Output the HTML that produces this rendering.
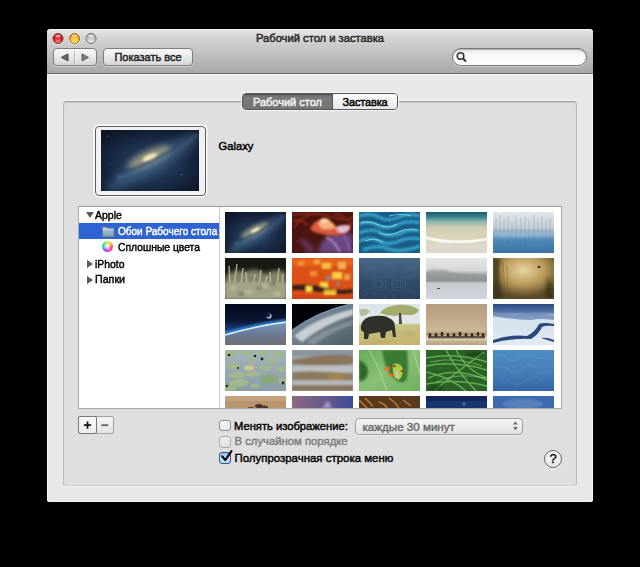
<!DOCTYPE html>
<html><head><meta charset="utf-8">
<style>
*{margin:0;padding:0;box-sizing:border-box}
html,body{width:640px;height:567px;overflow:hidden;background:#000}
body{position:relative;font-family:"Liberation Sans",sans-serif;font-size:11px;color:#000;-webkit-text-stroke:0.45px currentColor}
.a{position:absolute}
#win{left:47px;top:29px;width:546px;height:473px;background:#e8e8e8;border-radius:4px 4px 3px 3px;overflow:hidden;box-shadow:inset 1px 0 0 #f6f6f6,inset -1px 0 0 #f6f6f6,inset 0 -1px 0 #f6f6f6}
#tb{left:47px;top:29px;width:546px;height:45px;background:linear-gradient(#e4e4e4 0px,#d4d4d4 8px,#a6a6a6 44px);border-bottom:1px solid #686868;border-top:1px solid #f4f4f4;border-radius:4px 4px 0 0;box-shadow:0 1px 0 #f8f8f8}
.tl{width:11px;height:11px;border-radius:50%;top:32px}
#title{left:47px;width:546px;top:32px;text-align:center;font-size:11.2px;color:#222;text-shadow:0 1px 0 rgba(255,255,255,.5)}
.btn{background:linear-gradient(#f8f8f8,#e8e8e8 50%,#d6d6d6);border:1px solid #7e7e7e;border-radius:4px;box-shadow:0 1px 0 rgba(255,255,255,.45)}
#gb{left:63px;top:101px;width:514px;height:385px;background:#dfdfdf;border:1px solid #b9b9b9;border-top-color:#9c9c9c;border-bottom-color:#d0d0d0;border-radius:3px;box-shadow:0 1px 0 #f2f2f2,0 -1px 0 #f6f6f6,inset 0 1px 1px rgba(0,0,0,.1)}
#tabs{left:242px;top:93px;width:156px;height:17px;border:1px solid #555;border-radius:4px;overflow:hidden;box-shadow:0 0 0 1px rgba(255,255,255,.75)}
#list{left:78px;top:206px;width:484px;height:203px;background:#fff;border:1px solid #a9a9a9;border-top-color:#9a9a9a}
.t{position:absolute;width:61px;height:41px;overflow:hidden}
.cb{position:absolute;width:12px;height:12px;border:1px solid #8c8c8c;border-radius:3px;background:linear-gradient(#fff,#e9e9e9)}
.lbl{position:absolute;font-size:11.2px;white-space:nowrap;text-shadow:0 1px 0 rgba(255,255,255,.45)}
.row{position:absolute;font-size:11px;white-space:nowrap}
</style></head><body>
<div id="win" class="a"></div>
<div id="tb" class="a"></div>
<svg class="a" style="left:50px;top:30.5px" width="48" height="16" viewBox="0 0 48 16">
<defs>
<radialGradient id="rdb" cx="50%" cy="80%" r="70%"><stop offset="0" stop-color="#ff8a80"/><stop offset=".5" stop-color="#d8302a"/><stop offset="1" stop-color="#a81410"/></radialGradient>
<radialGradient id="ylb" cx="50%" cy="85%" r="75%"><stop offset="0" stop-color="#fff27a"/><stop offset=".5" stop-color="#f7c23a"/><stop offset="1" stop-color="#de8a18"/></radialGradient>
<radialGradient id="gyb" cx="50%" cy="80%" r="70%"><stop offset="0" stop-color="#e8e8e8"/><stop offset=".6" stop-color="#c4c4c4"/><stop offset="1" stop-color="#a0a0a0"/></radialGradient>
</defs>
<g transform="translate(8 7.5)"><circle r="6.2" fill="rgba(235,248,250,.8)"/><circle r="5.1" fill="url(#rdb)" stroke="#8a1c1a" stroke-width=".9"/><ellipse cy="-2.6" rx="2.8" ry="1.6" fill="#fff" opacity=".55"/></g>
<g transform="translate(24.5 7.5)"><circle r="6.2" fill="rgba(235,245,252,.8)"/><circle r="5.1" fill="url(#ylb)" stroke="#9a5a10" stroke-width=".9"/><ellipse cy="-2.6" rx="2.8" ry="1.6" fill="#fff" opacity=".5"/></g>
<g transform="translate(41 7.5)"><circle r="6.2" fill="rgba(240,240,240,.6)"/><circle r="5.1" fill="url(#gyb)" stroke="#6e6e6e" stroke-width="1"/><ellipse cy="-2.6" rx="2.8" ry="1.6" fill="#fff" opacity=".5"/></g>
</svg>
<div id="title" class="a">Рабочий стол и заставка</div>
<div class="a btn" style="left:53px;top:48px;width:44px;height:18px"></div>
<div class="a" style="left:74px;top:51px;width:1px;height:12.5px;background:#b0b0b0;box-shadow:1px 0 0 rgba(255,255,255,.5)"></div>
<svg class="a" style="left:53px;top:49px" width="44" height="17"><path d="M8.3 8.4 L15 4.9 L15 11.9Z" fill="#6a6a6a" stroke="#404040" stroke-width=".9" stroke-linejoin="round"/><path d="M35.4 8.4 L29 4.9 L29 11.9Z" fill="#7e7e7e" stroke="#505050" stroke-width=".9" stroke-linejoin="round"/></svg>
<div class="a btn" style="left:103px;top:48px;width:90px;height:18px"></div>
<div class="a" style="left:103px;top:51px;width:90px;text-align:center;font-size:11px;color:#222">Показать все</div>
<div class="a" style="left:452px;top:48px;width:135px;height:18px;border-radius:9px;background:linear-gradient(#e8e8e8,#fafafa 40%,#fff);border:1px solid #777;box-shadow:inset 0 1px 1px rgba(0,0,0,.25),0 1px 0 rgba(255,255,255,.4)"></div>
<svg class="a" style="left:455.2px;top:51.2px" width="14" height="12"><circle cx="5.5" cy="5" r="3.3" fill="none" stroke="#333" stroke-width="1.6"/><path d="M8 7.5 L11 10.5" stroke="#333" stroke-width="2"/></svg>

<div id="gb" class="a"></div>
<div id="tabs" class="a">
  <div class="a" style="left:0;top:0;width:89px;height:15px;background:linear-gradient(#666,#7a7a7a 25%,#747474);box-shadow:inset 0 1px 1px rgba(0,0,0,.25);color:#f4f4f4;text-align:center;line-height:16px;font-size:11px">Рабочий стол</div>
  <div class="a" style="left:89px;top:0;width:65px;height:15px;background:linear-gradient(#fdfdfd,#f0f0f0 60%,#e6e6e6);border-left:1px solid #555;color:#000;text-align:center;line-height:16px;font-size:11px;letter-spacing:-.15px">Заставка</div>
</div>

<!-- preview -->
<div class="a" style="left:95px;top:126px;width:111px;height:70px;border-radius:4px;background:#f2f2f2;border:1px solid #5a5a5a;box-shadow:0 0 0 1.5px #fcfcfc"></div>
<div class="a" style="left:101px;top:130px;width:98px;height:61px;overflow:hidden"><svg width="98" height="61" viewBox="0 0 61 41" preserveAspectRatio="none"><defs><radialGradient id="gbgp" cx="50%" cy="55%" r="70%"><stop offset="0" stop-color="#2c4666"/><stop offset=".5" stop-color="#1a2c48"/><stop offset="1" stop-color="#0a1220"/></radialGradient></defs>
<rect width="61" height="41" fill="url(#gbgp)"/>
<g filter="url(#b3)"><ellipse cx="32" cy="22" rx="36" ry="5.5" transform="rotate(-33 32 22)" fill="#46688e" opacity=".75"/></g>
<g filter="url(#b2)"><ellipse cx="30" cy="18.5" rx="15" ry="4.6" transform="rotate(-27 30 18.5)" fill="#aca884" opacity=".8"/></g>
<g filter="url(#b1)"><ellipse cx="30.5" cy="18.5" rx="5" ry="2" transform="rotate(-25 30.5 18.5)" fill="#fff0c0"/></g>
<g filter="url(#b1)"><path d="M10 32 Q36 22 60 3" stroke="#6a90b8" stroke-width="2.2" fill="none" opacity=".45"/></g>
<g filter="url(#b1)"><path d="M12 30 Q36 20.5 60 3" stroke="#182a42" stroke-width="1.8" fill="none" opacity=".6"/></g>
<g fill="#a8bcd0" opacity=".55"><circle cx="4" cy="4" r=".35"/><circle cx="20" cy="6" r=".3"/><circle cx="50" cy="30" r=".35"/><circle cx="38" cy="34" r=".3"/><circle cx="6" cy="22" r=".3"/><circle cx="56" cy="14" r=".3"/></g></svg></div>
<div class="a" style="left:218.5px;top:139.5px;font-size:11.2px">Galaxy</div>

<div id="list" class="a"></div>
<div class="a" style="left:219px;top:207px;width:1px;height:201px;background:#c8c8c8"></div>
<!-- source list -->
<svg class="a" style="left:85px;top:210px" width="10" height="10"><path d="M1 2 L9 2 L5 8Z" fill="#5a5a5a"/></svg>
<div class="row" style="left:95px;top:208.5px;transform:scaleX(.952);transform-origin:0 0">Apple</div>
<div class="a" style="left:79px;top:223px;width:140px;height:16px;background:#2f62d2"></div>
<svg class="a" style="left:101px;top:225px" width="15" height="13"><defs><linearGradient id="fdg" x1="0" y1="0" x2="0" y2="1"><stop offset="0" stop-color="#b4ccdc"/><stop offset="1" stop-color="#7e9cb2"/></linearGradient></defs><path d="M1.5 2 h4 l1 1.2 h6.5 v8.6 h-11.5z" fill="url(#fdg)" stroke="#5a7890" stroke-width=".8"/><path d="M1.5 4.2 h11.5" stroke="#d0e0ea" stroke-width=".7"/></svg>
<div class="row" style="left:117.5px;top:224.5px;color:#fff;transform:scaleX(.91);transform-origin:0 0">Обои Рабочего стола</div>
<div class="a" style="left:102px;top:241px;width:11px;height:11px;border-radius:50%;background:conic-gradient(#d8f040,#ffa040 60deg,#ff4060 100deg,#ff40c0 160deg,#a040ff 210deg,#40c0ff 260deg,#40e080 310deg,#d8f040)"></div>
<div class="a" style="left:104px;top:243px;width:7px;height:7px;border-radius:50%;background:radial-gradient(rgba(255,255,255,.9),rgba(255,255,255,0))"></div>
<div class="row" style="left:117.5px;top:240.5px;transform:scaleX(.938);transform-origin:0 0">Сплошные цвета</div>
<svg class="a" style="left:85px;top:259px" width="10" height="10"><path d="M2 1 L2 9 L8 5Z" fill="#5a5a5a"/></svg>
<div class="row" style="left:95px;top:257.5px;transform:scaleX(.945);transform-origin:0 0">iPhoto</div>
<svg class="a" style="left:85px;top:275px" width="10" height="10"><path d="M2 1 L2 9 L8 5Z" fill="#5a5a5a"/></svg>
<div class="row" style="left:95px;top:273px;transform:scaleX(.97);transform-origin:0 0">Папки</div>

<!-- thumbnails -->
<div id="grid" class="a" style="left:220px;top:207px;width:341px;height:201px;overflow:hidden">
<svg width="0" height="0" style="position:absolute"><defs><filter id="b1" x="-20%" y="-20%" width="140%" height="140%"><feGaussianBlur stdDeviation="1"/></filter><filter id="b2" x="-30%" y="-30%" width="160%" height="160%"><feGaussianBlur stdDeviation="2"/></filter><filter id="b3" x="-50%" y="-50%" width="200%" height="200%"><feGaussianBlur stdDeviation="3.5"/></filter><filter id="bh" x="-10%" y="-10%" width="120%" height="120%"><feGaussianBlur stdDeviation=".5"/></filter></defs></svg>
<div class="t" style="left:5px;top:5px"><svg width="61" height="41" viewBox="0 0 61 41"><defs><radialGradient id="gbg" cx="50%" cy="55%" r="70%"><stop offset="0" stop-color="#2c4666"/><stop offset=".5" stop-color="#1a2c48"/><stop offset="1" stop-color="#0a1220"/></radialGradient></defs>
<rect width="61" height="41" fill="url(#gbg)"/>
<g filter="url(#b3)"><ellipse cx="32" cy="22" rx="36" ry="5.5" transform="rotate(-33 32 22)" fill="#46688e" opacity=".75"/></g>
<g filter="url(#b2)"><ellipse cx="30" cy="18.5" rx="15" ry="4.6" transform="rotate(-27 30 18.5)" fill="#aca884" opacity=".8"/></g>
<g filter="url(#b1)"><ellipse cx="30.5" cy="18.5" rx="5" ry="2" transform="rotate(-25 30.5 18.5)" fill="#fff0c0"/></g>
<g filter="url(#b1)"><path d="M10 32 Q36 22 60 3" stroke="#6a90b8" stroke-width="2.2" fill="none" opacity=".45"/></g>
<g filter="url(#b1)"><path d="M12 30 Q36 20.5 60 3" stroke="#182a42" stroke-width="1.8" fill="none" opacity=".6"/></g>
<g fill="#a8bcd0" opacity=".55"><circle cx="4" cy="4" r=".35"/><circle cx="20" cy="6" r=".3"/><circle cx="50" cy="30" r=".35"/><circle cx="38" cy="34" r=".3"/><circle cx="6" cy="22" r=".3"/><circle cx="56" cy="14" r=".3"/></g></svg></div>
<div class="t" style="left:72px;top:5px"><svg width="61" height="41" viewBox="0 0 61 41"><rect width="61" height="41" fill="#4a1410"/>
<g filter="url(#b1)" fill="none" stroke="#8e2c1c" stroke-width="2.2" opacity=".85"><path d="M0 3 Q20 -1 40 5 T61 3"/><path d="M2 16 Q8 4 24 1"/><path d="M42 1 Q54 5 61 13"/><path d="M0 9 Q10 6 16 14"/></g>
<g filter="url(#b2)"><path d="M26 41 Q28 28 38 23 Q50 20 61 22 V41Z" fill="#6e4c8e" opacity=".9"/><path d="M8 26 Q18 26 24 41 H14 Q12 32 6 30Z" fill="#6a3a6a" opacity=".7"/></g>
<g filter="url(#b1)"><path d="M18 17 Q22 8 32 6 Q40 8 44 15 Q50 12 58 13 Q60 19 52 22 Q40 25 30 22 Q22 21 18 17Z" fill="#d85a3a"/><path d="M26 12 Q30 6 36 7 Q42 12 44 16 Q36 18 30 17Z" fill="#f4b080"/><path d="M44 15 Q52 12 58 14 Q58 20 50 21 Q44 20 44 15Z" fill="#e0c0d4"/></g>
<g filter="url(#b1)"><ellipse cx="32" cy="9" rx="3.5" ry="2" fill="#ffd8b0"/><path d="M34 25 Q44 30 48 41" stroke="#b8a0d8" stroke-width="2" fill="none" opacity=".7"/><path d="M52 23 Q56 30 58 41" stroke="#a890c8" stroke-width="1.5" fill="none" opacity=".5"/></g></svg></div>
<div class="t" style="left:139px;top:5px"><svg width="61" height="41" viewBox="0 0 61 41"><rect width="61" height="41" fill="#1a5c86"/>
<g filter="url(#b1)" fill="none" stroke="#3cb8dc" stroke-width="3" opacity=".8">
<path d="M0 4 Q12 0 22 6 Q30 10 40 5 Q50 1 61 4"/><path d="M0 12 Q10 8 20 14 Q30 18 40 12 Q50 8 61 11"/><path d="M0 21 Q14 15 24 22 Q34 26 44 20 Q52 17 61 19"/><path d="M0 29 Q12 24 22 30 Q32 34 42 28 Q52 25 61 27"/><path d="M4 38 Q18 32 30 37 Q42 41 61 34"/></g>
<g filter="url(#bh)" fill="none" stroke="#7ee0f0" stroke-width="1.1" opacity=".8"><path d="M2 11 Q10 8 20 13 Q30 17 38 12"/><path d="M20 21 Q30 25 42 19 Q50 16 58 18"/><path d="M6 29 Q16 25 24 30"/><path d="M30 4 Q42 1 52 4"/></g></svg></div>
<div class="t" style="left:206px;top:5px"><svg width="61" height="41" viewBox="0 0 61 41"><defs><linearGradient id="bch" x1="0" y1="0" x2="0" y2="1"><stop offset="0" stop-color="#1e5a6c"/><stop offset=".1" stop-color="#2e7a8a"/><stop offset=".24" stop-color="#8cb8ac"/><stop offset=".38" stop-color="#d0ccb0"/><stop offset=".6" stop-color="#dad4b8"/><stop offset="1" stop-color="#dedace"/></linearGradient></defs>
<rect width="61" height="41" fill="url(#bch)"/>
<g filter="url(#bh)"><path d="M0 24 Q10 27 24 28 Q40 29 61 26 L61 28.5 Q40 32 24 31.5 Q10 30 0 27Z" fill="#f8f6ee"/></g>
<rect y="31" width="61" height="10" fill="#dcd8cc"/></svg></div>
<div class="t" style="left:273px;top:5px"><svg width="61" height="41" viewBox="0 0 61 41"><defs><linearGradient id="ftr" x1="0" y1="0" x2="0" y2="1"><stop offset="0" stop-color="#e2e6ea"/><stop offset=".38" stop-color="#c4ced6"/><stop offset=".52" stop-color="#7aa4c6"/><stop offset=".72" stop-color="#4a86b6"/><stop offset="1" stop-color="#3a74a6"/></linearGradient></defs>
<rect width="61" height="41" fill="url(#ftr)"/>
<g filter="url(#bh)" stroke="#4a5662" opacity=".32"><path d="M3 6V26M7 3V30M11 8V22M15 4V34M19 10V28M23 3V30M28 6V24M32 4V33M36 8V27M41 3V31M45 6V25M49 4V32M53 8V28M57 5V30" stroke-width=".7"/></g>
<g filter="url(#b1)"><rect y="20" width="61" height="5" fill="#dfe6ec" opacity=".3"/></g></svg></div>
<div class="t" style="left:5px;top:51px"><svg width="61" height="41" viewBox="0 0 61 41"><rect width="61" height="41" fill="#161a12"/>
<g filter="url(#b2)"><path d="M0 18 Q10 10 20 14 Q30 8 40 16 Q50 10 61 14 V41 H0Z" fill="#84846a"/></g>
<g filter="url(#bh)" stroke="#c4c0a0" stroke-width="1.3" fill="none" opacity=".9"><path d="M5 26 L4 8M9 28 L12 6M16 26 L18 10M22 28 L21 14M28 30 L30 16M34 28 L36 12M40 28 L42 18M46 30 L45 14M52 28 L54 10M57 30 L58 16"/></g>
<g filter="url(#b1)"><rect y="24" width="61" height="17" fill="#a2a284"/><g fill="#c4c4a8" opacity=".7"><ellipse cx="8" cy="30" rx="3" ry="2"/><ellipse cx="24" cy="34" rx="4" ry="2"/><ellipse cx="40" cy="28" rx="3" ry="2"/><ellipse cx="52" cy="36" rx="4" ry="2"/></g><g fill="#6a6a50" opacity=".6"><ellipse cx="16" cy="36" rx="3" ry="2"/><ellipse cx="34" cy="30" rx="3" ry="1.5"/><ellipse cx="48" cy="26" rx="3" ry="2"/></g></g></svg></div>
<div class="t" style="left:72px;top:51px"><svg width="61" height="41" viewBox="0 0 61 41"><rect width="61" height="41" fill="#dc5018"/>
<g filter="url(#b1)"><rect x="0" y="0" width="61" height="8" fill="#e8641c"/><rect x="6" y="3" width="6" height="5" fill="#f09030"/><rect x="22" y="2" width="6" height="4" fill="#f0a838"/><rect x="30" y="5" width="9" height="6" fill="#f4c040"/><rect x="46" y="4" width="8" height="7" fill="#f0b050"/><rect x="40" y="14" width="10" height="7" fill="#f8d048"/><rect x="18" y="13" width="7" height="5" fill="#f09030"/><rect x="52" y="16" width="6" height="6" fill="#e8a040"/><rect x="34" y="18" width="4" height="4" fill="#58a8c8" opacity=".8"/><rect x="44" y="24" width="3" height="3" fill="#58a8c8" opacity=".8"/><rect x="28" y="24" width="8" height="6" fill="#f8d840"/>
<path d="M0 27 Q20 25 34 30 Q46 33 61 31 V35 Q44 38 30 34 Q14 32 0 32Z" fill="#3a2418"/><rect x="14" y="28" width="6" height="6" fill="#f8e040"/><rect x="32" y="32" width="12" height="6" fill="#f0c038"/></g>
<rect y="37" width="61" height="4" fill="#c8401a" opacity=".6"/></svg></div>
<div class="t" style="left:139px;top:51px"><svg width="61" height="41" viewBox="0 0 61 41"><defs><linearGradient id="bpt" x1="0" y1="0" x2="0" y2="1"><stop offset="0" stop-color="#4a6888"/><stop offset=".5" stop-color="#344f70"/><stop offset="1" stop-color="#283e5c"/></linearGradient></defs>
<rect width="61" height="41" fill="url(#bpt)"/>
<g fill="none" stroke="#6a88a8" stroke-width=".5" opacity=".45"><circle cx="10" cy="14" r="4"/><circle cx="10" cy="14" r="7"/><circle cx="30" cy="12" r="4"/><circle cx="30" cy="12" r="7"/><circle cx="50" cy="14" r="4"/><circle cx="50" cy="14" r="7"/><circle cx="20" cy="26" r="4"/><circle cx="20" cy="26" r="7"/><circle cx="40" cy="26" r="4"/><circle cx="40" cy="26" r="7"/><circle cx="10" cy="38" r="4"/><circle cx="10" cy="38" r="7"/><circle cx="30" cy="38" r="4"/><circle cx="30" cy="38" r="7"/><circle cx="50" cy="38" r="4"/><circle cx="50" cy="38" r="7"/></g></svg></div>
<div class="t" style="left:206px;top:51px"><svg width="61" height="41" viewBox="0 0 61 41"><defs><linearGradient id="fog" x1="0" y1="0" x2="0" y2="1"><stop offset="0" stop-color="#e6e6e4"/><stop offset=".3" stop-color="#d6d8d8"/><stop offset=".4" stop-color="#a8acac"/><stop offset=".55" stop-color="#949898"/><stop offset=".62" stop-color="#c8ccd0"/><stop offset="1" stop-color="#d0d4dc"/></linearGradient></defs>
<rect width="61" height="41" fill="url(#fog)"/>
<g filter="url(#b1)"><path d="M0 14 Q6 10 12 12 Q18 10 24 14 Q40 16 61 17 V23 H0Z" fill="#8a9090" opacity=".6"/></g>
<rect x="11" y="30" width="3" height="1" fill="#555"/></svg></div>
<div class="t" style="left:273px;top:51px"><svg width="61" height="41" viewBox="0 0 61 41"><defs><radialGradient id="gld" cx="50%" cy="30%" r="65%"><stop offset="0" stop-color="#e8d4a0"/><stop offset=".55" stop-color="#b89858"/><stop offset="1" stop-color="#5a4a28"/></radialGradient></defs>
<rect width="61" height="41" fill="url(#gld)"/>
<g filter="url(#b2)"><path d="M0 0 H7 Q4 20 10 41 H0Z" fill="#3a3218" opacity=".9"/><path d="M56 18 Q59 30 61 41 H52Z" fill="#3a3218"/></g>
<g filter="url(#bh)" stroke="#6a5a30" stroke-width=".8" opacity=".6"><path d="M10 4 L12 36M14 8 L15 38"/></g>
<ellipse cx="46" cy="9" rx="1.5" ry="1.1" fill="#111"/></svg></div>
<div class="t" style="left:5px;top:97px"><svg width="61" height="41" viewBox="0 0 61 41"><defs><linearGradient id="eh" x1="0" y1="0" x2="0" y2="1"><stop offset="0" stop-color="#04081a"/><stop offset=".4" stop-color="#0a1634"/><stop offset=".7" stop-color="#1a4a90"/><stop offset="1" stop-color="#3a7ad0"/></linearGradient><linearGradient id="eh2" x1="0" y1="0" x2="0" y2="1"><stop offset="0" stop-color="#7a98c0"/><stop offset=".5" stop-color="#6a7a94"/><stop offset="1" stop-color="#706e78"/></linearGradient></defs>
<rect width="61" height="41" fill="url(#eh)"/>
<path d="M0 31 Q30 22 61 18 V41 H0Z" fill="url(#eh2)"/>
<g filter="url(#b1)"><path d="M0 29.5 Q30 20.5 61 16.5" stroke="#3a9ef0" stroke-width="3" fill="none" opacity=".8"/></g>
<g filter="url(#bh)"><path d="M0 31 Q30 22 61 18" stroke="#e0f6ff" stroke-width="1.4" fill="none"/></g>
<g filter="url(#bh)"><circle cx="44" cy="12" r="2.6" fill="#b8c4d8"/><circle cx="43" cy="11.2" r="2.1" fill="#0e1a3a"/></g></svg></div>
<div class="t" style="left:72px;top:97px"><svg width="61" height="41" viewBox="0 0 61 41"><defs><linearGradient id="ec" x1="0" y1="0" x2="1" y2="1"><stop offset="0" stop-color="#8a9aaa"/><stop offset="1" stop-color="#4e5e68"/></linearGradient></defs>
<rect width="61" height="41" fill="#020306"/>
<path d="M0 41 L0 26 Q24 8 58 0 H61 V41Z" fill="url(#ec)"/>
<g filter="url(#b1)"><path d="M2 32 Q24 14 61 5 L61 11 Q32 20 10 38Z" fill="#d8dce0" opacity=".85"/><path d="M14 38 Q34 24 61 16 V21 Q38 28 22 41Z" fill="#9aa4ac" opacity=".6"/></g>
<path d="M0 26 Q24 8 58 0" stroke="#7aa8d8" stroke-width=".9" fill="none"/></svg></div>
<div class="t" style="left:139px;top:97px"><svg width="61" height="41" viewBox="0 0 61 41"><defs><linearGradient id="elg" x1="0" y1="0" x2="0" y2="1"><stop offset="0" stop-color="#dae4ea"/><stop offset=".45" stop-color="#e2e8e6"/><stop offset=".52" stop-color="#c8c084"/><stop offset="1" stop-color="#c6b46e"/></linearGradient></defs>
<rect width="61" height="41" fill="url(#elg)"/>
<g filter="url(#bh)"><path d="M21 9 Q26 2 38 1 Q52 0 60 6 Q58 11 50 11 Q42 10 36 12 Q28 12 21 9Z" fill="#a4ac6c"/><path d="M40 9 L42 9 L43 20 L40 20Z" fill="#4a4430"/><path d="M0 6 Q5 3 11 7 Q8 12 2 12Z" fill="#a8b48a" opacity=".8"/>
<path d="M2 22 Q4 12 16 12 Q26 11 30 14 Q36 16 36 24 L37 33 L34 33 L33 26 L27 28 L26 34 L22 34 L21 28 L10 30 L9 35 L5 35 L5 28 Q1 27 2 22Z" fill="#2e302a"/></g>
<g filter="url(#b1)" fill="#b4ac68" opacity=".6"><ellipse cx="20" cy="38" rx="12" ry="2"/><ellipse cx="50" cy="30" rx="8" ry="2"/></g></svg></div>
<div class="t" style="left:206px;top:97px"><svg width="61" height="41" viewBox="0 0 61 41"><defs><linearGradient id="flm" x1="0" y1="0" x2="0" y2="1"><stop offset="0" stop-color="#b49c80"/><stop offset=".65" stop-color="#ccb694"/><stop offset=".74" stop-color="#a89070"/><stop offset=".84" stop-color="#e8dec6"/><stop offset=".9" stop-color="#c8b494"/><stop offset="1" stop-color="#b8a284"/></linearGradient></defs>
<rect width="61" height="41" fill="url(#flm)"/>
<g fill="#30261e" filter="url(#bh)"><rect x="2" y="32" width="57" height="2.5" opacity=".7"/><ellipse cx="4" cy="31" rx="1.4" ry="2"/><ellipse cx="10" cy="31" rx="1.4" ry="2"/><ellipse cx="16" cy="30" rx="1.4" ry="2.2"/><ellipse cx="22" cy="31" rx="1.4" ry="2"/><ellipse cx="28" cy="31" rx="1.4" ry="2"/><ellipse cx="34" cy="30" rx="1.4" ry="2.2"/><ellipse cx="40" cy="31" rx="1.4" ry="2"/><ellipse cx="46" cy="31" rx="1.4" ry="2"/><ellipse cx="52" cy="30" rx="1.4" ry="2"/><ellipse cx="57" cy="31" rx="1.4" ry="2"/></g></svg></div>
<div class="t" style="left:273px;top:97px"><svg width="61" height="41" viewBox="0 0 61 41"><defs><linearGradient id="icg" x1="0" y1="0" x2="0" y2="1"><stop offset="0" stop-color="#2a4a7e"/><stop offset=".2" stop-color="#5476a8"/><stop offset=".32" stop-color="#d4e0ee"/><stop offset="1" stop-color="#e2eaf4"/></linearGradient></defs>
<rect width="61" height="41" fill="url(#icg)"/>
<g filter="url(#bh)"><path d="M0 8 Q20 12 30 10 Q44 8 61 12 V16 Q48 14 38 16 Q22 16 0 12Z" fill="#6a8ab6" opacity=".8"/>
<path d="M0 36 Q18 30 34 32 Q42 28 46 20 Q50 18 61 20 V22 Q52 21 49 23 Q46 30 38 35 Q20 34 0 39Z" fill="#2a4a7a"/><path d="M48 34 Q54 33 61 36 V38 Q54 36 48 34Z" fill="#2a4a7a"/></g></svg></div>
<div class="t" style="left:5px;top:143px"><svg width="61" height="41" viewBox="0 0 61 41"><defs><linearGradient id="lpw" x1="0" y1="0" x2="0" y2="1"><stop offset="0" stop-color="#a4b4bc"/><stop offset="1" stop-color="#8a9ca6"/></linearGradient></defs>
<rect width="61" height="41" fill="url(#lpw)"/>
<g filter="url(#bh)" fill="#a0b88a"><ellipse cx="6" cy="3" rx="6" ry="2.8"/><ellipse cx="22" cy="3" rx="6" ry="2.5"/><ellipse cx="38" cy="3" rx="6" ry="2.8"/><ellipse cx="54" cy="4" rx="6" ry="3"/><ellipse cx="28" cy="10" rx="5" ry="2.2"/><ellipse cx="46" cy="11" rx="6" ry="2.5"/><ellipse cx="8" cy="16" rx="7" ry="3"/><ellipse cx="24" cy="18" rx="5" ry="2.5" fill="#d0c888"/><ellipse cx="40" cy="18" rx="6" ry="2.8"/><ellipse cx="56" cy="19" rx="5" ry="3"/><ellipse cx="12" cy="25" rx="8" ry="3.2"/><ellipse cx="28" cy="24" rx="7" ry="2.8"/><ellipse cx="44" cy="29" rx="9" ry="4.5" fill="#88a874"/><ellipse cx="14" cy="33" rx="10" ry="3.8"/><ellipse cx="5" cy="38" rx="7" ry="3"/><ellipse cx="58" cy="31" rx="4" ry="3"/><ellipse cx="30" cy="36" rx="5" ry="2"/></g>
<g fill="#1a2416"><circle cx="4" cy="5" r="1.3"/><circle cx="30" cy="6" r="1.3"/><circle cx="37" cy="9" r="1.4"/><circle cx="58" cy="33" r="1.4"/><circle cx="2" cy="36" r="1.2"/><circle cx="13" cy="18" r="1"/></g></svg></div>
<div class="t" style="left:72px;top:143px"><svg width="61" height="41" viewBox="0 0 61 41"><rect width="61" height="41" fill="#a0a6aa"/>
<g filter="url(#b1)"><rect width="61" height="6" fill="#8a949c"/><path d="M0 10 Q20 6 40 5 Q52 4 61 6 V14 Q30 16 0 14Z" fill="#8a7458"/><path d="M20 8 L30 6 L40 8Z" fill="#b05a30" opacity=".6"/><path d="M0 16 H61 V22 H0Z" fill="#bcc0c2"/><path d="M0 22 Q30 20 61 24 V30 H0Z" fill="#8c7a5c"/><path d="M36 24 L52 24 L50 30 L38 30Z" fill="#c0902e" opacity=".5"/><path d="M0 31 H61 V35 H0Z" fill="#b8bab8"/><path d="M0 35 H61 V41 H0Z" fill="#867660"/></g></svg></div>
<div class="t" style="left:139px;top:143px"><svg width="61" height="41" viewBox="0 0 61 41"><defs><linearGradient id="frl" x1="0" y1="0" x2="1" y2="1"><stop offset="0" stop-color="#6aac5a"/><stop offset=".5" stop-color="#88c074"/><stop offset="1" stop-color="#70b060"/></linearGradient></defs>
<rect width="61" height="41" fill="url(#frl)"/>
<g filter="url(#b1)"><path d="M23 0 H48 Q50 18 48 28 Q46 34 40 32 Q30 26 26 14 Q24 6 23 0Z" fill="#3a7a30"/><path d="M0 10 Q7 12 9 20 Q9 30 2 31 L0 31Z" fill="#2e6a26"/></g>
<g filter="url(#bh)" fill="none" stroke="#b8e0a0" stroke-width="1" opacity=".75"><path d="M10 0 Q22 20 28 41"/><path d="M54 0 Q58 12 61 24"/></g>
<g filter="url(#bh)"><path d="M34 14 Q42 12 44 20 Q44 26 40 30 L36 28 Q33 22 34 14Z" fill="#a8d040"/><path d="M36 20 Q40 22 40 28 L37 27Z" fill="#d8b8c8"/><path d="M25 19 Q29 15 31 17 L30 21 Q27 22 25 19Z" fill="#f07028"/><path d="M28 24 Q33 23 35 26 L31 27Z" fill="#f07028"/><circle cx="35.5" cy="16" r="1.3" fill="#d02818"/><circle cx="43" cy="21" r="1.3" fill="#d02818"/></g></svg></div>
<div class="t" style="left:206px;top:143px"><svg width="61" height="41" viewBox="0 0 61 41"><rect width="61" height="41" fill="#2c6226"/>
<g filter="url(#bh)" stroke="#6cb85a" stroke-width="1.5" fill="none" opacity=".85"><path d="M0 8 Q30 2 61 12"/><path d="M0 16 Q28 10 61 20"/><path d="M2 28 Q30 16 61 30"/><path d="M8 41 Q28 24 58 2"/><path d="M0 22 Q22 26 40 41"/><path d="M20 0 Q30 20 50 41"/><path d="M0 34 Q30 28 61 36"/><path d="M30 0 Q40 20 61 28"/></g>
<g filter="url(#bh)" stroke="#a0d888" stroke-width=".8" fill="none" opacity=".7"><path d="M4 12 Q30 6 56 16"/><path d="M10 32 Q30 22 60 28"/></g>
<g filter="url(#b1)" fill="#163a14" opacity=".6"><ellipse cx="10" cy="38" rx="8" ry="3"/><ellipse cx="48" cy="4" rx="8" ry="3"/></g></svg></div>
<div class="t" style="left:273px;top:143px"><svg width="61" height="41" viewBox="0 0 61 41"><defs><linearGradient id="bd" x1="0" y1="0" x2="0" y2="1"><stop offset="0" stop-color="#4e8cc4"/><stop offset=".5" stop-color="#4680bc"/><stop offset="1" stop-color="#3466a4"/></linearGradient></defs>
<rect width="61" height="41" fill="url(#bd)"/>
<g fill="none" stroke="#7ab0e0" stroke-width=".6" opacity=".35"><path d="M4 6 Q10 2 14 8 T26 8 T40 6 T56 8"/><path d="M2 18 Q10 14 16 20 T30 18 T46 20 T60 16"/><path d="M6 30 Q12 26 18 32 T34 30 T50 32"/></g></svg></div>
<div class="t" style="left:5px;top:189px"><svg width="61" height="41" viewBox="0 0 61 41"><rect width="61" height="41" fill="#b8946c"/><rect width="61" height="5" fill="#c4a07c"/><g filter="url(#bh)" fill="#4a3626"><ellipse cx="34" cy="10" rx="4" ry="2"/><ellipse cx="40" cy="11" rx="3" ry="1.5"/><ellipse cx="26" cy="12" rx="3" ry="1"/></g></svg></div>
<div class="t" style="left:72px;top:189px"><svg width="61" height="41" viewBox="0 0 61 41"><defs><linearGradient id="p5" x1="0" y1="0" x2="1" y2="0"><stop offset="0" stop-color="#8a6a80"/><stop offset=".5" stop-color="#6a5a8c"/><stop offset="1" stop-color="#3e4c98"/></linearGradient></defs><rect width="61" height="41" fill="url(#p5)"/><g filter="url(#b1)"><path d="M30 12 L36 4 L40 12Z" fill="#c8c0e0" opacity=".6"/></g></svg></div>
<div class="t" style="left:139px;top:189px"><svg width="61" height="41" viewBox="0 0 61 41"><rect width="61" height="41" fill="#5a3a1c"/><g filter="url(#bh)" stroke="#d89040" stroke-width="1.4" fill="none" opacity=".8"><path d="M0 4 L8 12M6 2 L14 10M30 2 Q36 6 40 12M44 4 L52 10M20 6 Q26 8 28 12"/></g></svg></div>
<div class="t" style="left:206px;top:189px"><svg width="61" height="41" viewBox="0 0 61 41"><rect width="61" height="41" fill="#1a3470"/><rect width="61" height="5" fill="#13285a"/><circle cx="38" cy="8" r="2" fill="#5a7ab0" opacity=".6"/></svg></div>
<div class="t" style="left:273px;top:189px"><svg width="61" height="41" viewBox="0 0 61 41"><rect width="61" height="41" fill="#3c6aac"/><g filter="url(#b1)"><ellipse cx="30" cy="8" rx="20" ry="5" fill="#6a90c4" opacity=".6"/></g></svg></div>
</div>

<!-- plus minus -->
<div class="a" style="left:78px;top:416px;width:36px;height:18px;border:1px solid #a0a0a0;border-radius:2px;background:linear-gradient(#f4f4f4,#e4e4e4)"></div>
<div class="a" style="left:78px;top:416px;width:19px;height:18px;border:1px solid #777;border-radius:2px;background:linear-gradient(#f8f8f8,#ececec)"></div>
<svg class="a" style="left:78px;top:416px" width="36" height="18"><path d="M9.5 5.6 v7.2 M5.9 9.2 h7.2" stroke="#111" stroke-width="1.7"/><path d="M23.4 9.2 h6.8" stroke="#5a5a5a" stroke-width="1.7"/></svg>

<!-- checkboxes -->
<div class="cb" style="left:219px;top:419.5px;height:11.5px;background:linear-gradient(#fafafa,#e6e6e6)"></div>
<div class="lbl" style="left:234px;top:420px">Менять изображение:</div>
<div class="a" style="left:355px;top:417.5px;width:168px;height:17px;border:1px solid #a0a0a0;border-radius:4px;background:linear-gradient(#f6f6f6,#ececec 50%,#e2e2e2);box-shadow:0 1px 0 rgba(255,255,255,.5)"></div>
<div class="lbl" style="left:362.5px;top:420px;color:#6a6a6a;font-size:11.6px">каждые 30 минут</div>
<svg class="a" style="left:510.5px;top:419px" width="9" height="13"><path d="M2 5.6 L4.4 2.3 L6.8 5.6Z M2 8 L4.4 11.2 L6.8 8Z" fill="#6a6a6a"/></svg>
<div class="cb" style="left:219px;top:436px;height:11.5px;border-color:#ababab;background:linear-gradient(#ececec,#e0e0e0)"></div>
<div class="lbl" style="left:234.5px;top:435.2px;color:#7c7c7c;font-size:11.3px">В случайном порядке</div>
<div class="cb" style="left:219px;top:452px;border-color:#4a4a86;background:linear-gradient(#8cc0f0,#c4e6ff 55%,#a4d8fa)"></div>
<svg class="a" style="left:219px;top:447px" width="16" height="17"><path d="M3.2 9.4 L6.25 13 L12.5 4.2" fill="none" stroke="#000" stroke-width="2.1" stroke-linecap="round" stroke-linejoin="round"/></svg>
<div class="lbl" style="left:234.5px;top:452px;font-size:11.45px">Полупрозрачная строка меню</div>

<!-- help -->
<div class="a" style="left:544px;top:450px;width:18px;height:18px;border-radius:50%;border:1px solid #666;background:linear-gradient(#fff,#e4e4e4);box-shadow:0 1px 0 rgba(255,255,255,.6);text-align:center;font-size:13px;line-height:16px;color:#111">?</div>
</body></html>
